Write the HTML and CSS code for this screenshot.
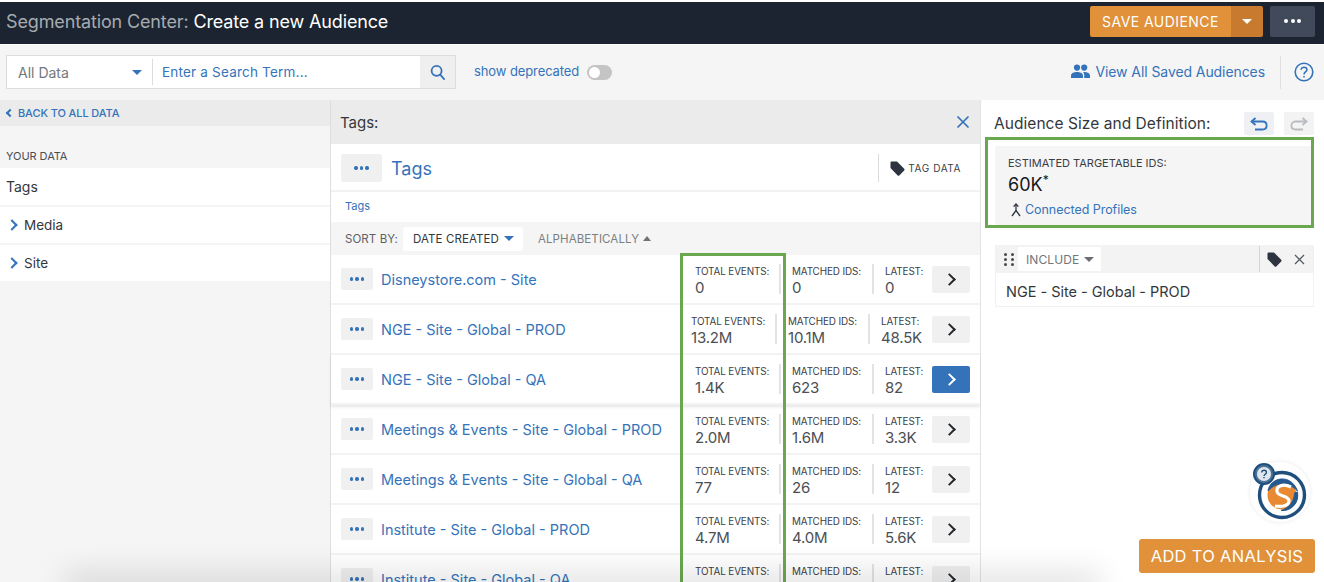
FILE: index.html
```html
<!DOCTYPE html>
<html lang="en">
<head>
  <meta charset="UTF-8" />
  <title>Segmentation Center</title>
  <link rel="stylesheet" href="styles.css">
</head>
<body>

<header class="topbar">
  <div class="page-title"><span class="crumb">Segmentation Center:</span> Create a new Audience</div>
  <div class="top-actions">
    <button class="save-btn">SAVE AUDIENCE</button>
    <button class="save-caret"><span class="caret caret-white"></span></button>
    <button class="top-more"><span class="dots dots-white"><i></i><i></i><i></i></span></button>
  </div>
</header>

<div class="toolbar">
  <div class="search">
    <div class="search-type">All Data <span class="caret caret-blue"></span></div>
    <div class="search-input">Enter a Search Term...</div>
    <div class="search-btn">
      <svg width="16" height="17" viewBox="0 0 16 17" fill="none" stroke="#3473ba" stroke-width="1.8"><circle cx="6.6" cy="6.8" r="5"/><path d="M10.2 10.6 L14.6 15.6"/></svg>
    </div>
  </div>
  <span class="deprecated">show deprecated</span>
  <span class="toggle"><i></i></span>
  <a class="saved">
    <svg width="19" height="14" viewBox="0 0 19 14" fill="#3473ba"><circle cx="6" cy="3.6" r="3.1"/><circle cx="13.2" cy="3.6" r="3.1"/><path d="M0 14 V11.4 C0 8.9 3.4 7.9 6 7.9 C8.6 7.9 12 8.9 12 11.4 V14 Z"/><path d="M13.2 14 V11 C13.2 9.8 12.7 8.8 11.9 8.1 C12.3 8 12.8 7.9 13.2 7.9 C15.6 7.9 19 8.9 19 11.4 V14 Z"/></svg>
    View All Saved Audiences
  </a>
  <span class="help">
    <svg width="20" height="20" viewBox="0 0 20 20" fill="none" stroke="#3473ba" stroke-width="1.6"><circle cx="10" cy="10" r="8.8"/><path d="M7.2 7.8 C7.2 4.4 12.9 4.5 12.9 7.8 C12.9 10 10 10 10 12.4"/><path d="M10 14 V15.6"/></svg>
  </span>
</div>

<main class="workspace">
  <aside class="left">
    <div class="back"><span class="chev chev-left"></span>BACK TO ALL DATA</div>
    <div class="your-data">YOUR DATA</div>
    <div class="tree-item tree-top">Tags</div>
    <div class="tree-item"><span class="chev chev-right"></span>Media</div>
    <div class="tree-item"><span class="chev chev-right"></span>Site</div>
  </aside>

  <section class="center">
    <div class="center-head">
      <span>Tags:</span>
      <svg width="14" height="14" viewBox="0 0 14 14" fill="none" stroke="#3473ba" stroke-width="1.7"><path d="M1.5 1.5 L12.5 12.5 M12.5 1.5 L1.5 12.5"/></svg>
    </div>
    <div class="title-row">
      <button class="more more-big"><span class="dots"><i></i><i></i><i></i></span></button>
      <span class="title-link">Tags</span>
      <div class="tag-data">
        <svg width="15" height="15" viewBox="0 0 15 15" fill="#2d3440"><path d="M0.5 1.8 C0.5 1 1 0.5 1.8 0.5 H7 L14.2 7.8 C14.7 8.3 14.7 8.9 14.2 9.4 L9.3 14.4 C8.8 14.9 8.2 14.9 7.7 14.4 L0.5 7 Z"/></svg>
        TAG DATA
      </div>
    </div>
    <div class="breadcrumb">Tags</div>
    <div class="sort-row">
      <span class="sort-label">SORT BY:</span>
      <span class="sort-on">DATE CREATED <span class="caret caret-blue"></span></span>
      <span class="sort-off">ALPHABETICALLY <span class="caret-up"></span></span>
    </div>

    <div class="row">
      <button class="more"><span class="dots"><i></i><i></i><i></i></span></button>
      <a class="name">Disneystore.com - Site</a>
      <div class="stats">
        <div class="stat s-total"><small>TOTAL EVENTS:</small><b>0</b></div>
        <div class="stat s-matched"><small>MATCHED IDS:</small><b>0</b></div>
        <div class="stat s-latest"><small>LATEST:</small><b>0</b></div>
      </div>
      <button class="go"><span class="chev chev-go"></span></button>
    </div>
    <div class="row row-wide">
      <button class="more"><span class="dots"><i></i><i></i><i></i></span></button>
      <a class="name">NGE - Site - Global - PROD</a>
      <div class="stats">
        <div class="stat s-total"><small>TOTAL EVENTS:</small><b>13.2M</b></div>
        <div class="stat s-matched"><small>MATCHED IDS:</small><b>10.1M</b></div>
        <div class="stat s-latest"><small>LATEST:</small><b>48.5K</b></div>
      </div>
      <button class="go"><span class="chev chev-go"></span></button>
    </div>
    <div class="row row-hover">
      <button class="more"><span class="dots"><i></i><i></i><i></i></span></button>
      <a class="name">NGE - Site - Global - QA</a>
      <div class="stats">
        <div class="stat s-total"><small>TOTAL EVENTS:</small><b>1.4K</b></div>
        <div class="stat s-matched"><small>MATCHED IDS:</small><b>623</b></div>
        <div class="stat s-latest"><small>LATEST:</small><b>82</b></div>
      </div>
      <button class="go go-active"><span class="chev chev-go"></span></button>
    </div>
    <div class="row">
      <button class="more"><span class="dots"><i></i><i></i><i></i></span></button>
      <a class="name">Meetings &amp; Events - Site - Global - PROD</a>
      <div class="stats">
        <div class="stat s-total"><small>TOTAL EVENTS:</small><b>2.0M</b></div>
        <div class="stat s-matched"><small>MATCHED IDS:</small><b>1.6M</b></div>
        <div class="stat s-latest"><small>LATEST:</small><b>3.3K</b></div>
      </div>
      <button class="go"><span class="chev chev-go"></span></button>
    </div>
    <div class="row">
      <button class="more"><span class="dots"><i></i><i></i><i></i></span></button>
      <a class="name">Meetings &amp; Events - Site - Global - QA</a>
      <div class="stats">
        <div class="stat s-total"><small>TOTAL EVENTS:</small><b>77</b></div>
        <div class="stat s-matched"><small>MATCHED IDS:</small><b>26</b></div>
        <div class="stat s-latest"><small>LATEST:</small><b>12</b></div>
      </div>
      <button class="go"><span class="chev chev-go"></span></button>
    </div>
    <div class="row">
      <button class="more"><span class="dots"><i></i><i></i><i></i></span></button>
      <a class="name">Institute - Site - Global - PROD</a>
      <div class="stats">
        <div class="stat s-total"><small>TOTAL EVENTS:</small><b>4.7M</b></div>
        <div class="stat s-matched"><small>MATCHED IDS:</small><b>4.0M</b></div>
        <div class="stat s-latest"><small>LATEST:</small><b>5.6K</b></div>
      </div>
      <button class="go"><span class="chev chev-go"></span></button>
    </div>
    <div class="row">
      <button class="more"><span class="dots"><i></i><i></i><i></i></span></button>
      <a class="name">Institute - Site - Global - QA</a>
      <div class="stats">
        <div class="stat s-total"><small>TOTAL EVENTS:</small><b>777</b></div>
        <div class="stat s-matched"><small>MATCHED IDS:</small><b>250</b></div>
        <div class="stat s-latest"><small>LATEST:</small><b>7</b></div>
      </div>
      <button class="go"><span class="chev chev-go"></span></button>
    </div>

    <div class="highlight-col"></div>
  </section>

  <aside class="right">
    <div class="right-head">
      <span class="right-title">Audience Size and Definition:</span>
      <button class="hist">
        <svg width="18" height="14" viewBox="0 0 18 14" fill="none" stroke="#3473ba" stroke-width="1.8"><path d="M5.5 1 L1.5 4.5 L5.5 8"/><path d="M1.5 4.5 H12.5 C18 4.5 18 12.5 12.5 12.5 H5"/></svg>
      </button>
      <button class="hist hist-off">
        <svg width="18" height="14" viewBox="0 0 18 14" fill="none" stroke="#b9bcc0" stroke-width="1.8"><path d="M12.5 1 L16.5 4.5 L12.5 8"/><path d="M16.5 4.5 H5.5 C0 4.5 0 12.5 5.5 12.5 H13"/></svg>
      </button>
    </div>
    <div class="estimate">
      <div class="estimate-in">
        <div class="est-label">ESTIMATED TARGETABLE IDS:</div>
        <div class="est-value">60K<sup>*</sup></div>
        <div class="est-link">
          <svg width="12" height="14" viewBox="0 0 12 14" fill="none" stroke="#2d3440" stroke-width="1.3"><path d="M6 1.5 V7.5 L2 13"/><path d="M6 7.5 L10 13"/><path d="M3.6 3.6 L6 1 L8.4 3.6"/></svg>
          <a>Connected Profiles</a>
        </div>
      </div>
    </div>
    <div class="include">
      <div class="include-head">
        <span class="grip"><i></i><i></i><i></i><i></i><i></i><i></i></span>
        <span class="include-pick">INCLUDE <span class="caret caret-gray"></span></span>
        <span class="include-tools">
          <svg width="15" height="15" viewBox="0 0 15 15" fill="#2d3440"><path d="M0.5 1.8 C0.5 1 1 0.5 1.8 0.5 H7 L14.2 7.8 C14.7 8.3 14.7 8.9 14.2 9.4 L9.3 14.4 C8.8 14.9 8.2 14.9 7.7 14.4 L0.5 7 Z"/></svg>
          <svg width="11" height="11" viewBox="0 0 11 11" fill="none" stroke="#555a60" stroke-width="1.3"><path d="M1 1 L10 10 M10 1 L1 10"/></svg>
        </span>
      </div>
      <div class="include-body">NGE - Site - Global - PROD</div>
    </div>
    <div class="helper">
      <svg width="60" height="60" viewBox="0 0 60 60">
        <circle cx="30" cy="30" r="30" fill="#fff"/>
        <circle cx="32" cy="33" r="22.5" fill="none" stroke="#1f4f7d" stroke-width="3.4"/>
        <circle cx="32" cy="33" r="14.5" fill="#e98a33"/>
        <path d="M18 29 C20 15 41 11 47.5 29 C39 20 27 19 18 29 Z" fill="#23598f" stroke="#23598f"/>
        <path d="M47.5 30 C49.5 41 41 49.5 31 48.5 C40 46 44.5 38 44.5 31 Z" fill="#23598f" stroke="#23598f"/>
        <path d="M41 25 C33 21 26 24 27 29.5 C28 35 38 33 39 38.5 C39.5 43 33 45.5 25 44" fill="none" stroke="#fff" stroke-width="3.2"/>
        <circle cx="14" cy="12" r="10" fill="#4d7396" stroke="#1f4f7d" stroke-width="2"/>
        <circle cx="14" cy="12" r="7" fill="#dfe7ee"/>
        <path d="M11.8 10.4 C11.8 7.6 16.4 7.6 16.4 10.4 C16.4 12.2 14 12.2 14 14 M14 15 V16.2" fill="none" stroke="#1f4f7d" stroke-width="1.4"/>
      </svg>
    </div>
    <button class="add-btn">ADD TO ANALYSIS</button>
  </aside>
</main>

<div class="bottom-fade"></div>

</body>
</html>
```

FILE: styles.css
```css
* {
    box-sizing: border-box;
}

html, body {
    height: 582px;
    overflow: hidden;
}

body {
    margin: 0;
    padding-top: 2px;
    font-family: Inter, "Noto Sans", sans-serif;
    color: #33373c;
    background-color: #ffffff;
    position: relative;
}

button {
    border: none;
    padding: 0;
    font-family: inherit;
    cursor: pointer;
}

/* small shared bits */
.caret {
    display: inline-block;
    width: 0;
    height: 0;
    border-left: 5px solid transparent;
    border-right: 5px solid transparent;
    border-top: 5px solid #3473ba;
}

.caret-white {
    border-top-color: #ffffff;
}

.caret-gray {
    border-top-color: #6a6e73;
}

.caret-up {
    display: inline-block;
    width: 0;
    height: 0;
    margin-left: 1px;
    border-left: 4px solid transparent;
    border-right: 4px solid transparent;
    border-bottom: 5px solid #6f7378;
    vertical-align: 2px;
}

.dots {
    display: inline-flex;
    gap: 2px;
}

.dots i {
    width: 3.4px;
    height: 3.4px;
    border-radius: 50%;
    background-color: #3473ba;
}

.dots-white {
    gap: 2.5px;
}

.dots-white i {
    background-color: #ffffff;
    width: 4px;
    height: 4px;
}

.chev {
    display: inline-block;
    width: 7px;
    height: 7px;
    border-top: 2px solid #3473ba;
    border-right: 2px solid #3473ba;
}

.chev-left {
    transform: rotate(-135deg);
    width: 6px;
    height: 6px;
    margin: 0 5px 0 2px;
}

.chev-right {
    transform: rotate(45deg);
    width: 8px;
    height: 8px;
    margin: 0 8px 1px 2px;
}

.chev-go {
    transform: rotate(45deg);
    width: 9px;
    height: 9px;
    border-width: 2.2px;
    border-color: #24282d;
    margin-left: -3px;
}

/* top bar */
.topbar {
    height: 42px;
    background-color: #1b2430;
    display: flex;
    align-items: center;
    justify-content: space-between;
    padding: 0 9px 4px 6px;
}

.page-title {
    color: #ffffff;
    font-size: 18px;
    letter-spacing: -0.14px;
}

.crumb {
    color: #a6abb0;
}

.top-actions {
    display: flex;
}

.save-btn {
    width: 141px;
    height: 31px;
    background-color: #e09139;
    color: #ffffff;
    font-size: 14px;
    letter-spacing: 0.45px;
    border-radius: 2px 0 0 2px;
}

.save-caret {
    width: 32px;
    height: 31px;
    background-color: #c87b2e;
    border-radius: 0 2px 2px 0;
    display: flex;
    align-items: center;
    justify-content: center;
}

.top-more {
    width: 45px;
    height: 31px;
    margin-left: 7px;
    background-color: #414a5b;
    border-radius: 2px;
    display: flex;
    align-items: center;
    justify-content: center;
}

/* search strip */
.toolbar {
    height: 55px;
    margin-top: 1px;
    background-color: #f5f5f5;
    display: flex;
    align-items: center;
    padding: 0 10px 1px 6px;
}

.search {
    width: 450px;
    height: 34px;
    display: flex;
    background-color: #ffffff;
    border: 1px solid #dcdcdc;
}

.search-type {
    width: 146px;
    padding: 0 10px 0 11px;
    display: flex;
    align-items: center;
    justify-content: space-between;
    font-size: 14px;
    color: #74787d;
    border-right: 1px solid #dcdcdc;
    margin: 3px 0;
}

.search-input {
    flex: 1;
    padding-left: 9px;
    display: flex;
    align-items: center;
    font-size: 13.5px;
    letter-spacing: 0.2px;
    color: #3473ba;
}

.search-btn {
    width: 35px;
    background-color: #efefef;
    display: flex;
    align-items: center;
    justify-content: center;
}

.deprecated {
    margin-left: 18px;
    margin-bottom: 2px;
    font-size: 13px;
    letter-spacing: -0.1px;
    color: #3473ba;
}

.toggle {
    width: 25px;
    height: 15px;
    margin-left: 8px;
    background-color: #c4c4c4;
    border-radius: 8px;
    padding: 2px;
    display: flex;
}

.toggle i {
    width: 11px;
    height: 11px;
    border-radius: 50%;
    background-color: #ffffff;
}

.saved {
    margin-left: auto;
    margin-bottom: 2px;
    display: flex;
    align-items: center;
    gap: 5px;
    font-size: 14px;
    letter-spacing: -0.08px;
    color: #3473ba;
}

.help {
    height: 33px;
    margin-left: 15px;
    padding-left: 13px;
    border-left: 1px solid #e0e0e0;
    display: flex;
    align-items: center;
}

/* three columns */
.workspace {
    height: 482px;
    display: flex;
}

.left {
    width: 331px;
    background-color: #f5f5f5;
    border-right: 1px solid #dedede;
}

.back {
    height: 26px;
    padding: 0 0 1px 5px;
    display: flex;
    align-items: center;
    background-color: #ebebeb;
    color: #3473ba;
    font-size: 11px;
    font-weight: 500;
    letter-spacing: -0.1px;
}

.your-data {
    height: 42px;
    padding: 23px 0 0 6px;
    font-size: 11px;
    letter-spacing: -0.05px;
    color: #4a4e53;
}

.tree-item {
    height: 36px;
    margin-bottom: 2px;
    padding: 0 0 0 6px;
    display: flex;
    align-items: center;
    background-color: #ffffff;
    font-size: 13.5px;
}

.tree-top {
    height: 37px;
    font-size: 14px;
}

.center {
    width: 650px;
    position: relative;
    background-color: #ffffff;
    border-right: 1px solid #e3e3e3;
}

.center-head {
    height: 44px;
    padding: 0 10px 0 9px;
    display: flex;
    align-items: center;
    justify-content: space-between;
    background-color: #ebebeb;
    font-size: 15px;
}

.title-row {
    height: 48px;
    padding: 2px 10px 0;
    display: flex;
    align-items: center;
    border-bottom: 2px solid #f2f2f2;
}

.more {
    width: 32px;
    height: 22px;
    background-color: #f0f0f0;
    border-radius: 2px;
    display: flex;
    align-items: center;
    justify-content: center;
}

.more-big {
    width: 41px;
    height: 28px;
}

.title-link {
    margin-left: 9px;
    font-size: 18px;
    color: #3473ba;
}

.tag-data {
    height: 28px;
    margin-left: auto;
    padding: 0 9px 0 11px;
    display: flex;
    align-items: center;
    gap: 3px;
    border-left: 1px solid #dcdcdc;
    font-size: 10px;
    letter-spacing: 0.6px;
    color: #3a3e43;
}

.breadcrumb {
    height: 30px;
    padding: 7px 0 0 14px;
    font-size: 11px;
    color: #3473ba;
}

.sort-row {
    height: 33px;
    display: flex;
    align-items: center;
    padding: 0 0 0 14px;
    background-color: #f5f5f5;
    font-size: 11.5px;
    letter-spacing: 0.1px;
    color: #5d6166;
}

.sort-on {
    margin-left: 5px;
    padding: 0 9px 0 10px;
    width: 120px;
    height: 24px;
    display: flex;
    align-items: center;
    justify-content: space-between;
    background-color: #ffffff;
    border-radius: 3px;
    color: #33373c;
}

.sort-off {
    margin-left: 15px;
    color: #7a7e83;
}

.row {
    height: 50px;
    padding: 0 10px;
    display: flex;
    align-items: center;
    background-color: #ffffff;
    border-bottom: 2px solid #f3f3f3;
}

.row-hover {
    box-shadow: 0 2px 3px rgba(0, 0, 0, 0.1);
    position: relative;
}

.name {
    margin-left: 8px;
    font-size: 14.5px;
    color: #3473ba;
}

.stats {
    margin-left: auto;
    display: flex;
}

.row-wide .stats {
    margin-right: 4px;
}

.stat {
    height: 30px;
    padding-top: 1px;
    margin-right: 11px;
    border-right: 2px solid #e3e3e3;
}

.s-total {
    width: 86px;
}

.s-matched {
    width: 82px;
}

.s-latest {
    width: 47px;
    margin-right: 0;
    border-right: none;
}

.stat small {
    display: block;
    font-size: 9.9px;
    letter-spacing: -0.12px;
    white-space: nowrap;
    color: #3c4045;
}

.stat b {
    display: block;
    margin-top: 1px;
    font-size: 15px;
    font-weight: 400;
    letter-spacing: -0.2px;
    color: #4b4f54;
}

.go {
    width: 38px;
    height: 27px;
    background-color: #f0f0f0;
    border-radius: 2px;
    display: flex;
    align-items: center;
    justify-content: center;
}

.go-active {
    background-color: #3473ba;
}

.go-active .chev {
    border-color: #ffffff;
}

.highlight-col {
    position: absolute;
    left: 349px;
    top: 153px;
    width: 106px;
    height: 340px;
    border: 3px solid #6aa84f;
}

/* right column */
.right {
    flex: 1;
    position: relative;
    background-color: #ffffff;
    padding: 0 10px 0 5px;
}

.right-head {
    height: 37px;
    padding: 12px 0 0 8px;
    display: flex;
    align-items: flex-start;
}

.right-title {
    flex: 1;
    font-size: 15.5px;
    letter-spacing: 0.05px;
    margin-top: 2px;
    white-space: nowrap;
}

.hist {
    width: 30px;
    height: 23px;
    margin-left: 10px;
    background-color: #eef0f3;
    border-radius: 2px;
    display: flex;
    align-items: center;
    justify-content: center;
}

.hist-off {
    background-color: #f3f3f3;
}

.estimate {
    height: 91px;
    margin-left: -1px;
    border: 3px solid #6aa84f;
    padding: 6px 0 0 7px;
}

.estimate-in {
    height: 79px;
    background-color: #f5f5f5;
    padding: 10px 0 0 13px;
}

.est-label {
    font-size: 11px;
    color: #3c4045;
}

.est-value {
    margin-top: 4px;
    font-size: 18px;
    color: #17191c;
    line-height: 22px;
}

.est-value sup {
    font-size: 12px;
    line-height: 0;
}

.est-link {
    margin-top: 6px;
    margin-left: 2px;
    display: flex;
    align-items: center;
    gap: 3px;
    font-size: 12.5px;
    letter-spacing: -0.05px;
    color: #3473ba;
}

.include {
    margin: 17px 0 0 9px;
    height: 62px;
    border: 1px solid #f1f1f1;
    border-top: none;
}

.include-head {
    height: 28px;
    padding: 2px 8px 2px 8px;
    display: flex;
    align-items: center;
    background-color: #f3f3f3;
}

.grip {
    width: 10px;
    display: grid;
    grid-template-columns: 3px 3px;
    gap: 2px;
    justify-content: space-between;
}

.grip i {
    height: 3px;
    background-color: #444a52;
    border-radius: 50%;
}

.include-pick {
    margin-left: 4px;
    height: 100%;
    padding: 0 7px 0 8px;
    display: flex;
    align-items: center;
    gap: 5px;
    background-color: #ffffff;
    font-size: 12px;
    letter-spacing: 0.1px;
    color: #72767b;
}

.include-tools {
    margin-left: auto;
    width: 46px;
    height: 26px;
    padding-left: 7px;
    display: flex;
    align-items: center;
    justify-content: space-between;
    border-left: 1px solid #d5d5d5;
}

.include-body {
    padding: 10px 0 0 10px;
    font-size: 14.5px;
    letter-spacing: -0.02px;
}

.helper {
    position: absolute;
    left: 269px;
    top: 362px;
    width: 60px;
    height: 60px;
    border-radius: 50%;
    box-shadow: 0 0 4px rgba(0, 0, 0, 0.1);
    z-index: 3;
}

.add-btn {
    position: absolute;
    right: 9px;
    bottom: 9px;
    width: 176px;
    height: 34px;
    background-color: #e09139;
    color: #ffffff;
    border-radius: 3px;
    font-size: 16.5px;
    letter-spacing: 0.3px;
    z-index: 3;
}

.bottom-fade {
    position: absolute;
    left: 70px;
    right: 230px;
    bottom: -14px;
    height: 14px;
    box-shadow: 0 -4px 30px 6px rgba(0, 0, 0, 0.12);
    pointer-events: none;
}
```
